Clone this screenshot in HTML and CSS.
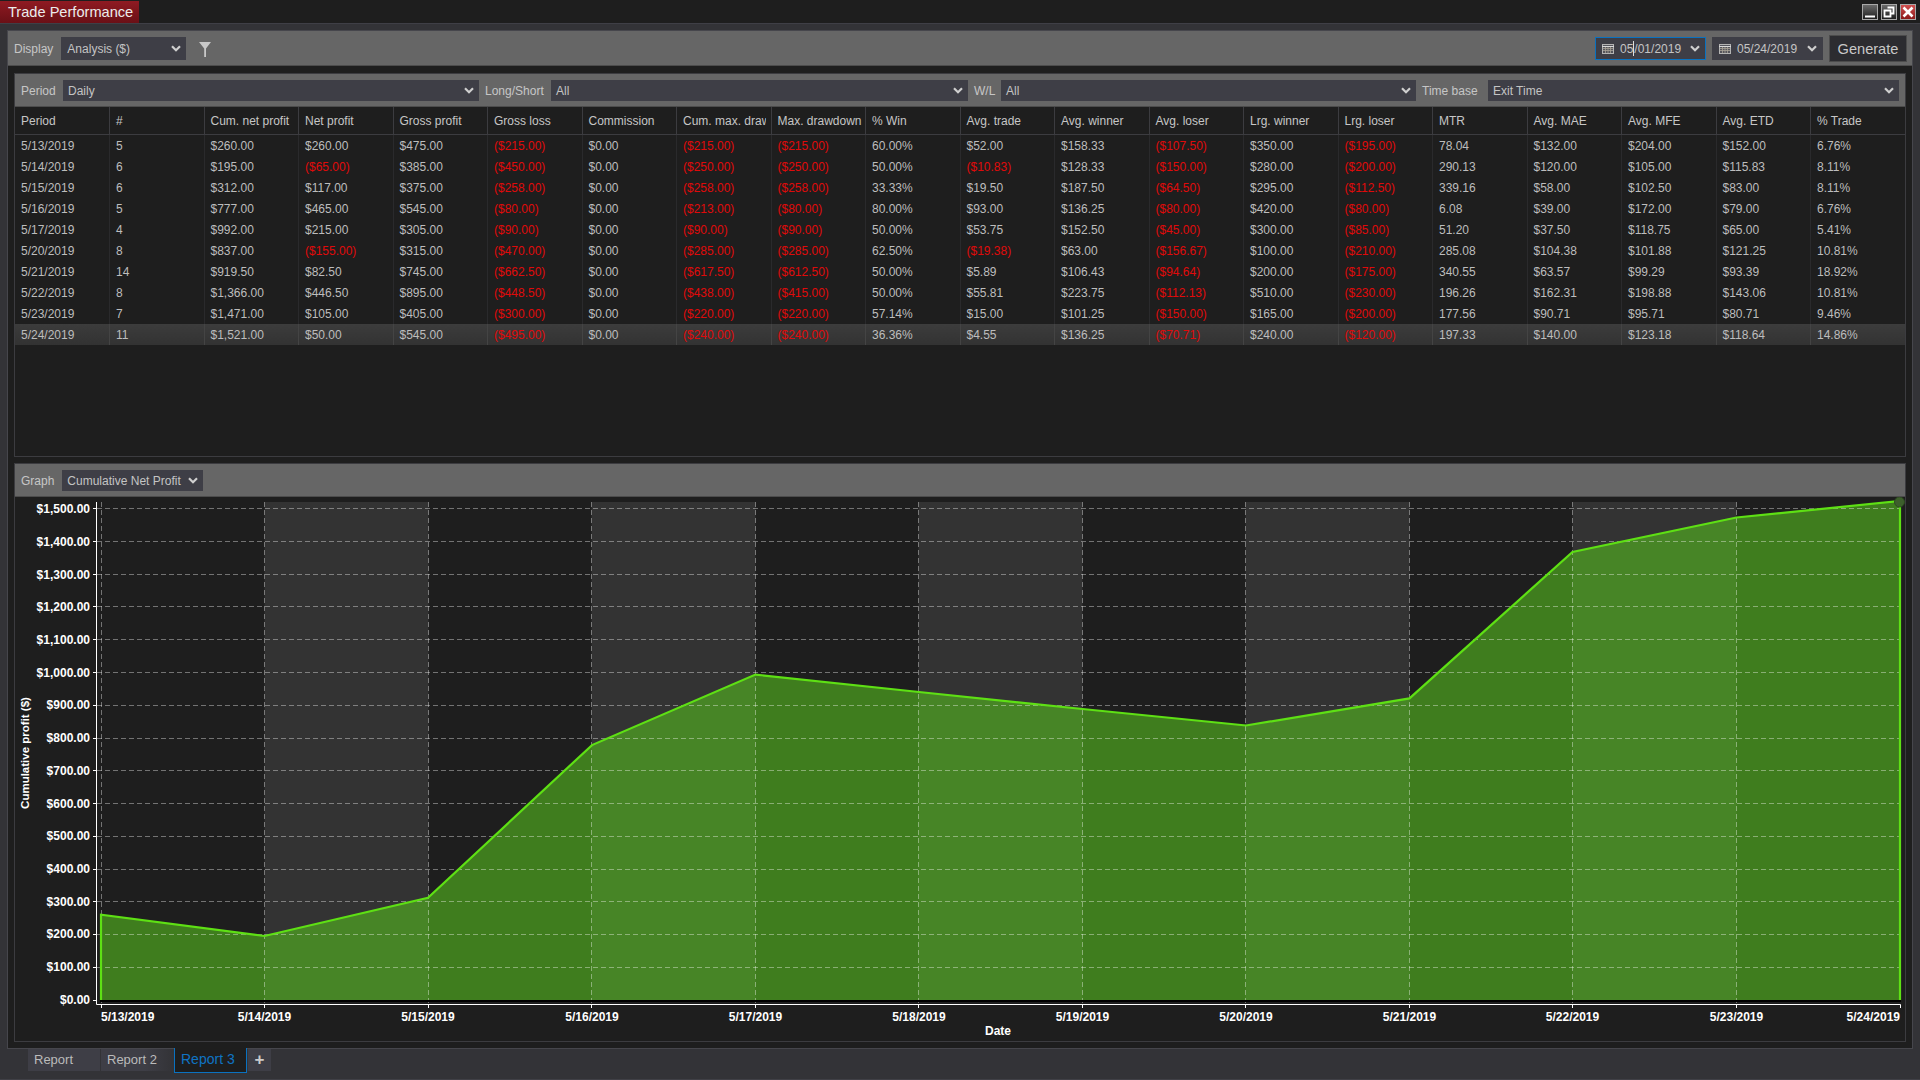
FILE: index.html
```html
<!DOCTYPE html>
<html>
<head>
    <meta charset="utf-8">
    <title>Trade Performance</title>
    <link rel="stylesheet" href="styles.css">
</head>
<body>
    <!-- shared icons -->
    <svg class="defs" width="0" height="0">
        <symbol id="chev" viewBox="0 0 10 7"><path d="M1 1.2L5 5.2L9 1.2" fill="none" stroke="#cfcfcf" stroke-width="2.2"/></symbol>
        <symbol id="cal" viewBox="0 0 12 10">
            <rect x="0.5" y="0.5" width="11" height="9" fill="#55555c" stroke="#b4b4b4"/>
            <path d="M0 2.5H12" stroke="#d8d8d8"/>
            <path d="M1 4.5H11M1 6.5H11M3.5 3V9M6 3V9M8.5 3V9" stroke="#a8a296" stroke-width="0.8"/>
        </symbol>
    </svg>

    <div class="window">
        <div class="titlebar">
            <div class="title-tab">Trade Performance</div>
            <div class="win-btns">
                <div class="win-btn"><svg width="14" height="14" viewBox="0 0 14 14"><path d="M2 11.5H12" stroke="#fff" stroke-width="2"/></svg></div>
                <div class="win-btn"><svg width="14" height="14" viewBox="0 0 14 14"><path d="M5.5 2.5H11.5V8.5H9M2.5 5.5H8.5V11.5H2.5Z" fill="none" stroke="#fff" stroke-width="1.8"/></svg></div>
                <div class="win-btn close"><svg width="14" height="14" viewBox="0 0 14 14"><path d="M2.5 2.5L11.5 11.5M11.5 2.5L2.5 11.5" stroke="#fff" stroke-width="2.6"/></svg></div>
            </div>
        </div>

        <div class="main">
            <div class="toolbar">
                <span class="lbl">Display</span>
                <div class="sel display-sel"><span>Analysis ($)</span><svg class="chev"><use href="#chev"/></svg></div>
                <svg class="funnel" width="12" height="15" viewBox="0 0 12 15"><path d="M0 0H12L7 6.5V15H5.2V6.5Z" fill="#c8c8c8"/></svg>
                <div class="spacer"></div>
                <div class="sel date focus"><svg class="cal"><use href="#cal"/></svg><span>05<i class="caret"></i>/01/2019</span><svg class="chev"><use href="#chev"/></svg></div>
                <div class="sel date"><svg class="cal"><use href="#cal"/></svg><span>05/24/2019</span><svg class="chev"><use href="#chev"/></svg></div>
                <div class="generate">Generate</div>
            </div>

            <div class="panel grid-panel">
                <div class="filter-bar">
                    <span class="lbl">Period</span>
                    <div class="sel"><span>Daily</span><svg class="chev"><use href="#chev"/></svg></div>
                    <span class="lbl">Long/Short</span>
                    <div class="sel"><span>All</span><svg class="chev"><use href="#chev"/></svg></div>
                    <span class="lbl">W/L</span>
                    <div class="sel"><span>All</span><svg class="chev"><use href="#chev"/></svg></div>
                    <span class="lbl">Time base</span>
                    <div class="sel"><span>Exit Time</span><svg class="chev"><use href="#chev"/></svg></div>
                </div>
                <table class="perf">
                    <thead>
                        <tr><th>Period</th><th>#</th><th>Cum. net profit</th><th>Net profit</th><th>Gross profit</th><th>Gross loss</th><th>Commission</th><th><span class="clip">Cum. max. drawdown</span></th><th>Max. drawdown</th><th>% Win</th><th>Avg. trade</th><th>Avg. winner</th><th>Avg. loser</th><th>Lrg. winner</th><th>Lrg. loser</th><th>MTR</th><th>Avg. MAE</th><th>Avg. MFE</th><th>Avg. ETD</th><th>% Trade</th></tr>
                    </thead>
                    <tbody>
                        <tr><td>5/13/2019</td><td>5</td><td>$260.00</td><td>$260.00</td><td>$475.00</td><td class="neg">($215.00)</td><td>$0.00</td><td class="neg">($215.00)</td><td class="neg">($215.00)</td><td>60.00%</td><td>$52.00</td><td>$158.33</td><td class="neg">($107.50)</td><td>$350.00</td><td class="neg">($195.00)</td><td>78.04</td><td>$132.00</td><td>$204.00</td><td>$152.00</td><td>6.76%</td></tr>
                        <tr><td>5/14/2019</td><td>6</td><td>$195.00</td><td class="neg">($65.00)</td><td>$385.00</td><td class="neg">($450.00)</td><td>$0.00</td><td class="neg">($250.00)</td><td class="neg">($250.00)</td><td>50.00%</td><td class="neg">($10.83)</td><td>$128.33</td><td class="neg">($150.00)</td><td>$280.00</td><td class="neg">($200.00)</td><td>290.13</td><td>$120.00</td><td>$105.00</td><td>$115.83</td><td>8.11%</td></tr>
                        <tr><td>5/15/2019</td><td>6</td><td>$312.00</td><td>$117.00</td><td>$375.00</td><td class="neg">($258.00)</td><td>$0.00</td><td class="neg">($258.00)</td><td class="neg">($258.00)</td><td>33.33%</td><td>$19.50</td><td>$187.50</td><td class="neg">($64.50)</td><td>$295.00</td><td class="neg">($112.50)</td><td>339.16</td><td>$58.00</td><td>$102.50</td><td>$83.00</td><td>8.11%</td></tr>
                        <tr><td>5/16/2019</td><td>5</td><td>$777.00</td><td>$465.00</td><td>$545.00</td><td class="neg">($80.00)</td><td>$0.00</td><td class="neg">($213.00)</td><td class="neg">($80.00)</td><td>80.00%</td><td>$93.00</td><td>$136.25</td><td class="neg">($80.00)</td><td>$420.00</td><td class="neg">($80.00)</td><td>6.08</td><td>$39.00</td><td>$172.00</td><td>$79.00</td><td>6.76%</td></tr>
                        <tr><td>5/17/2019</td><td>4</td><td>$992.00</td><td>$215.00</td><td>$305.00</td><td class="neg">($90.00)</td><td>$0.00</td><td class="neg">($90.00)</td><td class="neg">($90.00)</td><td>50.00%</td><td>$53.75</td><td>$152.50</td><td class="neg">($45.00)</td><td>$300.00</td><td class="neg">($85.00)</td><td>51.20</td><td>$37.50</td><td>$118.75</td><td>$65.00</td><td>5.41%</td></tr>
                        <tr><td>5/20/2019</td><td>8</td><td>$837.00</td><td class="neg">($155.00)</td><td>$315.00</td><td class="neg">($470.00)</td><td>$0.00</td><td class="neg">($285.00)</td><td class="neg">($285.00)</td><td>62.50%</td><td class="neg">($19.38)</td><td>$63.00</td><td class="neg">($156.67)</td><td>$100.00</td><td class="neg">($210.00)</td><td>285.08</td><td>$104.38</td><td>$101.88</td><td>$121.25</td><td>10.81%</td></tr>
                        <tr><td>5/21/2019</td><td>14</td><td>$919.50</td><td>$82.50</td><td>$745.00</td><td class="neg">($662.50)</td><td>$0.00</td><td class="neg">($617.50)</td><td class="neg">($612.50)</td><td>50.00%</td><td>$5.89</td><td>$106.43</td><td class="neg">($94.64)</td><td>$200.00</td><td class="neg">($175.00)</td><td>340.55</td><td>$63.57</td><td>$99.29</td><td>$93.39</td><td>18.92%</td></tr>
                        <tr><td>5/22/2019</td><td>8</td><td>$1,366.00</td><td>$446.50</td><td>$895.00</td><td class="neg">($448.50)</td><td>$0.00</td><td class="neg">($438.00)</td><td class="neg">($415.00)</td><td>50.00%</td><td>$55.81</td><td>$223.75</td><td class="neg">($112.13)</td><td>$510.00</td><td class="neg">($230.00)</td><td>196.26</td><td>$162.31</td><td>$198.88</td><td>$143.06</td><td>10.81%</td></tr>
                        <tr><td>5/23/2019</td><td>7</td><td>$1,471.00</td><td>$105.00</td><td>$405.00</td><td class="neg">($300.00)</td><td>$0.00</td><td class="neg">($220.00)</td><td class="neg">($220.00)</td><td>57.14%</td><td>$15.00</td><td>$101.25</td><td class="neg">($150.00)</td><td>$165.00</td><td class="neg">($200.00)</td><td>177.56</td><td>$90.71</td><td>$95.71</td><td>$80.71</td><td>9.46%</td></tr>
                        <tr class="cur"><td>5/24/2019</td><td>11</td><td>$1,521.00</td><td>$50.00</td><td>$545.00</td><td class="neg">($495.00)</td><td>$0.00</td><td class="neg">($240.00)</td><td class="neg">($240.00)</td><td>36.36%</td><td>$4.55</td><td>$136.25</td><td class="neg">($70.71)</td><td>$240.00</td><td class="neg">($120.00)</td><td>197.33</td><td>$140.00</td><td>$123.18</td><td>$118.64</td><td>14.86%</td></tr>
                    </tbody>
                </table>
            </div>

            <div class="panel graph-panel">
                <div class="graph-bar">
                    <span class="lbl">Graph</span>
                    <div class="sel graph-sel"><span>Cumulative Net Profit</span><svg class="chev"><use href="#chev"/></svg></div>
                </div>
                <!-- viewBox is in page pixels -->
                <svg class="chart" width="1890" height="544" viewBox="15 497 1890 544">
                    <g class="bands">
                        <rect x="264.5" y="502" width="164" height="498"/>
                        <rect x="591.5" y="502" width="164" height="498"/>
                        <rect x="918.5" y="502" width="164" height="498"/>
                        <rect x="1245.5" y="502" width="164" height="498"/>
                        <rect x="1572.5" y="502" width="164" height="498"/>
                    </g>
                    <polygon class="area" points="101,1000 101,914.7 264.5,936 428,897.7 592,745.1 755.5,674.6 1082.5,709 1246,725.5 1409.5,698.4 1572.5,552 1736.5,517.5 1900,501 1900,1000"/>
                    <path class="gridline" d="M97 508.5H1900M97 541.5H1900M97 574.5H1900M97 606.5H1900M97 639.5H1900M97 672.5H1900M97 705.5H1900M97 738.5H1900M97 770.5H1900M97 803.5H1900M97 836.5H1900M97 869.5H1900M97 901.5H1900M97 934.5H1900M97 967.5H1900"/>
                    <path class="gridline" d="M101.5 502V1004M264.5 502V1004M428.5 502V1004M591.5 502V1004M755.5 502V1004M918.5 502V1004M1082.5 502V1004M1245.5 502V1004M1409.5 502V1004M1572.5 502V1004M1736.5 502V1004"/>
                    <polyline class="line" points="101,1000 101,914.7 264.5,936 428,897.7 592,745.1 755.5,674.6 919,692 1082.5,709 1246,725.5 1409.5,698.4 1572.5,552 1736.5,517.5 1900,501 1900,1000"/>
                    <path class="baseline" d="M100 1001H1901"/>
                    <circle class="end-dot" cx="1899.5" cy="502" r="5"/>
                    <path class="axis" d="M96.5 502V1004.5H1900.5V1008"/>
                    <path class="axis" d="M93 508.5H96M93 541.5H96M93 574.5H96M93 606.5H96M93 639.5H96M93 672.5H96M93 705.5H96M93 738.5H96M93 770.5H96M93 803.5H96M93 836.5H96M93 869.5H96M93 901.5H96M93 934.5H96M93 967.5H96M93 1000.5H96"/>
                    <path class="axis" d="M101.5 1004V1008M264.5 1004V1008M428.5 1004V1008M591.5 1004V1008M755.5 1004V1008M918.5 1004V1008M1082.5 1004V1008M1245.5 1004V1008M1409.5 1004V1008M1572.5 1004V1008M1736.5 1004V1008"/>
                    <g class="y-labels">
                        <text x="90" y="513">$1,500.00</text>
                        <text x="90" y="546">$1,400.00</text>
                        <text x="90" y="579">$1,300.00</text>
                        <text x="90" y="611">$1,200.00</text>
                        <text x="90" y="644">$1,100.00</text>
                        <text x="90" y="677">$1,000.00</text>
                        <text x="90" y="709">$900.00</text>
                        <text x="90" y="742">$800.00</text>
                        <text x="90" y="775">$700.00</text>
                        <text x="90" y="808">$600.00</text>
                        <text x="90" y="840">$500.00</text>
                        <text x="90" y="873">$400.00</text>
                        <text x="90" y="906">$300.00</text>
                        <text x="90" y="938">$200.00</text>
                        <text x="90" y="971">$100.00</text>
                        <text x="90" y="1004">$0.00</text>
                    </g>
                    <g class="x-labels">
                        <text x="101" y="1021" class="first">5/13/2019</text>
                        <text x="264.5" y="1021">5/14/2019</text>
                        <text x="428" y="1021">5/15/2019</text>
                        <text x="592" y="1021">5/16/2019</text>
                        <text x="755.5" y="1021">5/17/2019</text>
                        <text x="919" y="1021">5/18/2019</text>
                        <text x="1082.5" y="1021">5/19/2019</text>
                        <text x="1246" y="1021">5/20/2019</text>
                        <text x="1409.5" y="1021">5/21/2019</text>
                        <text x="1572.5" y="1021">5/22/2019</text>
                        <text x="1736.5" y="1021">5/23/2019</text>
                        <text x="1900" y="1021" class="last">5/24/2019</text>
                        <text x="998" y="1035">Date</text>
                    </g>
                    <text class="y-title" transform="translate(29 753) rotate(-90)">Cumulative profit ($)</text>
                </svg>
            </div>
        </div>

        <div class="tabs">
            <div class="tab">Report</div>
            <div class="tab fade">Report 2</div>
            <div class="tab active">Report 3</div>
            <div class="tab add">+</div>
        </div>
    </div>
</body>
</html>
```

FILE: styles.css
```css
html, body{
    margin: 0;
    padding: 0;
}
body{
    width: 1920px;
    height: 1080px;
    overflow: hidden;
    background-color: #333337;
    color: #bdbdbd;
    font: 12px "Liberation Sans", Arial, sans-serif;
}
.defs{
    position: absolute;
}
.window{
    display: flex;
    flex-direction: column;
    height: 1079px;
    border-bottom: solid 1px #404046;
}

/* title bar */
.titlebar{
    display: flex;
    justify-content: space-between;
    height: 22px;
    padding-top: 1px;
    background-color: #1e1e1e;
    border-bottom: solid 1px #3f3f46;
}
.title-tab{
    width: 131px;
    padding-left: 8px;
    height: 22px;
    line-height: 23px;
    font-size: 14.6px;
    color: #ececec;
    background: linear-gradient(#8f1a22, #6a1016);
}
.win-btns{
    display: flex;
    gap: 3px;
    padding: 3px 4px 0 0;
}
.win-btn{
    width: 14px;
    height: 14px;
    border: solid 1px #a8a8a8;
    background: linear-gradient(#6a6a6a, #1e1e1e);
}
.win-btn.close{
    background: linear-gradient(#d05050, #8c1a1a);
}
.win-btn svg{
    display: block;
}

/* main frame */
.main{
    display: flex;
    flex-direction: column;
    height: 1017px;
    margin: 6px 7px 0;
    border: solid 1px #46464c;
    background-color: #1e1e1e;
}
.toolbar{
    display: flex;
    align-items: center;
    box-sizing: border-box;
    height: 35px;
    padding: 1px 5px 0 6px;
    background-color: #666;
    border-bottom: solid 1px #4c4c4c;
}
.lbl{
    color: #c6c6c6;
    white-space: nowrap;
}
.spacer{
    flex: 1 1 auto;
}

/* dropdowns */
.sel{
    display: flex;
    align-items: center;
    justify-content: space-between;
    box-sizing: border-box;
    height: 21px;
    padding: 0 5px;
    background-color: #3e3e46;
    color: #c4c4c4;
}
.chev{
    flex: none;
    width: 10px;
    height: 7px;
}
.display-sel{
    width: 125px;
    height: 23px;
    margin-left: 8px;
    padding: 0 5px 0 6px;
}
.funnel{
    margin-left: 13px;
    margin-top: 1px;
}
.date{
    width: 111px;
    height: 23px;
    margin-right: 6px;
    padding: 0 5px 0 6px;
    border: solid 1px #3e3e46;
}
.date.focus{
    border-color: #0a72c0;
}
.cal{
    flex: none;
    width: 12px;
    height: 10px;
}
.date span{
    flex: 1 1 auto;
    margin-left: 6px;
}
.caret{
    display: inline-block;
    width: 1px;
    height: 15px;
    margin-bottom: -3px;
    background-color: #ddd;
}
.generate{
    box-sizing: border-box;
    width: 78px;
    height: 27px;
    line-height: 27px;
    text-align: center;
    font-size: 14.6px;
    color: #c8c8c8;
    background-color: #2c2c30;
    border: solid 1px #4c4c4c;
}

/* panels */
.panel{
    margin: 7px 6px 0;
    border: solid 1px #3c3c40;
    width: 1890px;
}
.grid-panel{
    height: 382px;
}
.graph-panel{
    margin-top: 6px;
    height: 577px;
}
.filter-bar{
    display: grid;
    grid-template-columns: 42px 416px 72px 417px 33px 415px 72px 411px;
    align-items: center;
    box-sizing: border-box;
    height: 33px;
    padding: 1px 0 0 6px;
    background-color: #666;
    border-bottom: solid 1px #4c4c4c;
}
.filter-bar .sel + .lbl{
    padding-left: 6px;
}
.graph-bar{
    display: flex;
    align-items: center;
    box-sizing: border-box;
    height: 33px;
    padding: 1px 0 0 6px;
    background-color: #666;
    border-bottom: solid 1px #4c4c4c;
}
.graph-sel{
    width: 141px;
    margin-left: 8px;
}

/* table */
.perf{
    table-layout: fixed;
    width: 1890px;
    border-collapse: collapse;
    font-size: 12px;
}
.perf th{
    height: 27px;
    padding: 0 0 0 6px;
    font-weight: normal;
    text-align: left;
    color: #c6c6c6;
    white-space: nowrap;
    overflow: hidden;
    border-right: solid 1px #3c3c40;
    border-bottom: solid 1px #3c3c40;
}
.perf .clip{
    display: block;
    width: 83px;
    overflow: hidden;
}
.perf td{
    height: 21px;
    padding: 0 0 0 6px;
    white-space: nowrap;
    overflow: hidden;
    border-right: solid 1px #2a2a2c;
}
.perf th:last-child,
.perf td:last-child{
    border-right: none;
}
.perf .neg{
    color: #e00a0a;
}
.perf .cur td{
    background: linear-gradient(#3c3c3c, #323232);
    border-right-color: #444;
}

/* chart */
.chart{
    display: block;
}
.chart text{
    font: bold 12px "Liberation Sans", Arial, sans-serif;
    fill: #fff;
}
.bands rect{
    fill: #333;
}
.area{
    fill: #55bc1e;
    fill-opacity: 0.6;
}
.gridline{
    fill: none;
    stroke: #fff;
    stroke-opacity: 0.38;
    stroke-width: 1;
    stroke-dasharray: 5 3;
}
.line{
    fill: none;
    stroke: #5ee014;
    stroke-width: 2.2;
}
.baseline{
    stroke: #000;
    stroke-width: 2;
}
.end-dot{
    fill: #3d5f2c;
    stroke: #2e4a22;
}
.axis{
    fill: none;
    stroke: #fff;
    stroke-width: 1;
}
.y-labels text{
    text-anchor: end;
}
.x-labels text{
    text-anchor: middle;
}
.x-labels .first{
    text-anchor: start;
}
.x-labels .last{
    text-anchor: end;
}
.chart .y-title{
    text-anchor: middle;
    font-size: 11.5px;
}

/* bottom tabs */
.tabs{
    display: flex;
    height: 22px;
    padding-left: 28px;
}
.tab{
    box-sizing: border-box;
    width: 72px;
    margin-right: 1px;
    padding-left: 6px;
    line-height: 22px;
    font-size: 13px;
    color: #bbb;
    background-color: #3e3e46;
}
.tab.fade{
    background: linear-gradient(90deg, #3e3e46 60%, #333337);
}
.tab.active{
    width: 73px;
    height: 25px;
    margin-top: -1px;
    padding-left: 6px;
    line-height: 23px;
    font-size: 14px;
    color: #0f74c4;
    background-color: #1e1e1e;
    border: solid 1px #0a72c0;
    border-top: none;
}
.tab.add{
    width: 23px;
    padding: 0;
    text-align: center;
    font-size: 17px;
    font-weight: bold;
    color: #ccc;
}
```
